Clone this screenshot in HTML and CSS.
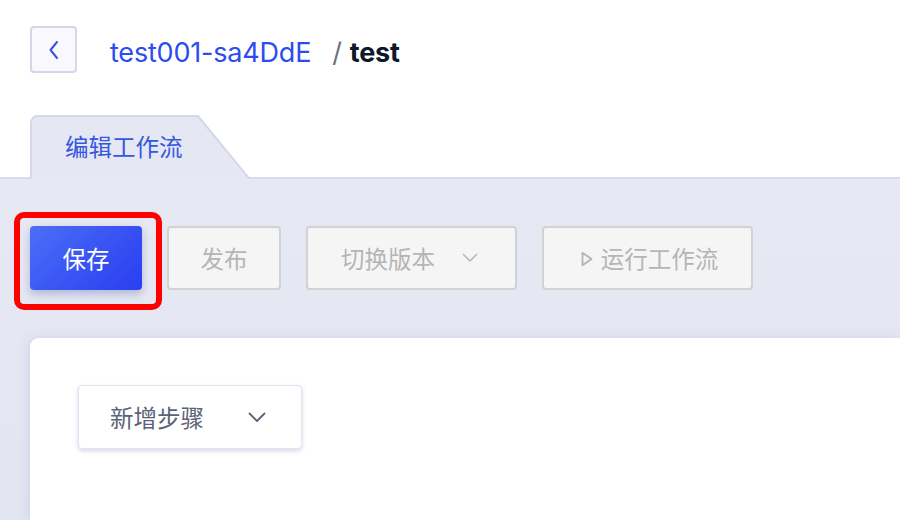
FILE: index.html
```html
<!DOCTYPE html>
<html lang="zh-CN">
<head>
<meta charset="utf-8">
<title>编辑工作流</title>
<link rel="stylesheet" href="styles.css">
</head>
<body>
<div class="page">
  <header class="header">
    <button class="back" type="button" aria-label="返回">
      <svg width="14" height="22" viewBox="0 0 14 22"><path d="M10 3 L3.5 11 L10 19" fill="none" stroke="#3552e6" stroke-width="2" stroke-linecap="round" stroke-linejoin="round"/></svg>
    </button>
    <nav class="crumbs">
      <a class="crumb-link" href="#">test001-sa4DdE</a>
      <span class="crumb-sep">/</span>
      <span class="crumb-current">test</span>
    </nav>
  </header>

  <div class="tabs">
    <div class="tab">
      <svg class="tab-shape" width="220" height="64" viewBox="0 0 220 64">
        <path d="M0 64 L0 9 Q0 0 9 0 L168 0 L220 64 Z" fill="#e5e7f3"/>
        <path d="M1 64 L1 9 Q1 1 9 1 L168 1 L219.5 64" fill="none" stroke="#d5d8eb" stroke-width="2"/>
      </svg>
      <span class="tab-label">编辑工作流</span>
    </div>
  </div>

  <main class="workspace">
    <div class="toolbar">
      <div class="highlight-wrap">
        <button class="btn btn-primary" type="button">保存</button>
        <span class="highlight"></span>
      </div>
      <button class="btn btn-disabled btn-publish" type="button">发布</button>
      <button class="btn btn-disabled btn-select" type="button">
        <span>切换版本</span>
        <svg class="chev" width="16" height="10" viewBox="0 0 16 10"><path d="M1.5 1.5 L8 8 L14.5 1.5" fill="none" stroke="#b8b8b8" stroke-width="1.6" stroke-linecap="round" stroke-linejoin="round"/></svg>
      </button>
      <button class="btn btn-disabled btn-run" type="button">
        <svg class="play" width="12" height="16" viewBox="0 0 12 16"><path d="M1.5 1.8 L10.5 8 L1.5 14.2 Z" fill="none" stroke="#b3b3b3" stroke-width="1.8" stroke-linejoin="round"/></svg>
        <span>运行工作流</span>
      </button>
    </div>

    <section class="card">
      <button class="dropdown" type="button">
        <span>新增步骤</span>
        <svg class="chev" width="18" height="11" viewBox="0 0 18 11"><path d="M1.5 1.5 L9 9 L16.5 1.5" fill="none" stroke="#5b6378" stroke-width="1.8" stroke-linecap="round" stroke-linejoin="round"/></svg>
      </button>
    </section>
  </main>
</div>
</body>
</html>
```

FILE: styles.css
```css
* { box-sizing: border-box; }
html, body { margin: 0; height: 100%; }
body {
  background: #ffffff;
  font-family: Inter, "Noto Sans CJK SC", sans-serif;
  overflow: hidden;
}
.page {
  display: flex;
  flex-direction: column;
  height: 520px;
}
.header {
  display: flex;
  align-items: center;
  padding: 26px 30px 0;
  height: 73px;
}
.back {
  width: 47px;
  height: 47px;
  padding: 0;
  display: flex;
  align-items: center;
  justify-content: center;
  background: #f8f8fd;
  border: 2px solid #d3d6ec;
  border-radius: 4px;
}
.crumbs {
  display: flex;
  align-items: baseline;
  margin-left: 33px;
  margin-top: 5px;
  font-size: 27px;
  letter-spacing: -0.2px;
}
.crumb-link {
  color: #2b4cf0;
  text-decoration: none;
}
.crumb-sep {
  color: #6b7280;
  margin-left: 21px;
  margin-right: 8px;
}
.crumb-current {
  color: #0f172a;
  font-weight: 700;
}
.tabs {
  display: flex;
  margin-top: 42px;
  padding-left: 30px;
  position: relative;
  z-index: 1;
  margin-bottom: -2px;
}
.tab {
  position: relative;
  width: 220px;
  height: 64px;
  display: flex;
  align-items: center;
}
.tab-shape {
  position: absolute;
  left: 0;
  top: 0;
}
.tab-label {
  position: relative;
  margin-left: 35px;
  margin-top: -2px;
  font-family: "Noto Sans CJK SC", sans-serif;
  font-size: 23.5px;
  color: #3557e0;
}
.workspace {
  flex: 1;
  display: flex;
  flex-direction: column;
  background: linear-gradient(180deg, #e6e8f3 0%, #e3e5f1 100%);
  border-top: 2px solid #d8dbee;
  padding: 47px 0 0 30px;
}
.toolbar {
  display: flex;
  gap: 25px;
  height: 64px;
}
.highlight-wrap {
  position: relative;
  display: flex;
}
.highlight {
  position: absolute;
  left: -16px;
  top: -14px;
  right: -20px;
  bottom: -20px;
  border: 6px solid #ff0000;
  border-radius: 10px;
  pointer-events: none;
}
.btn {
  height: 64px;
  padding: 0;
  display: flex;
  align-items: center;
  justify-content: center;
  font-family: "Noto Sans CJK SC", sans-serif;
  font-size: 23.5px;
  border-radius: 4px;
}
.btn-primary {
  width: 112px;
  color: #ffffff;
  border: none;
  background: linear-gradient(135deg, #4d6ef7 0%, #3a55f4 50%, #2a3ef0 100%);
  box-shadow: 0 4px 8px rgba(40, 60, 140, 0.28);
}
.btn-disabled {
  background: #f5f5f5;
  border: 2px solid #d2d2d2;
  color: #b5b5b5;
}
.btn-publish { width: 114px; }
.btn-select {
  width: 211px;
  justify-content: space-between;
  padding: 0 37px 0 33px;
}
.btn-run {
  width: 211px;
  gap: 8px;
  padding-left: 4px;
}
.play { margin-top: 1px; }
.card {
  flex: 1;
  margin-top: 48px;
  background: #ffffff;
  border-radius: 9px 0 0 0;
  box-shadow: -2px 0 10px rgba(160, 165, 200, 0.25);
  padding: 47px 48px;
}
.dropdown {
  width: 224px;
  height: 64px;
  display: flex;
  align-items: center;
  justify-content: space-between;
  padding: 0 35px 0 31px;
  background: #ffffff;
  border: 1px solid #e3e4f1;
  border-radius: 4px;
  box-shadow: 0 2px 4px rgba(120, 125, 170, 0.3);
  font-family: "Noto Sans CJK SC", sans-serif;
  font-size: 23.5px;
  color: #5b6378;
}
```
